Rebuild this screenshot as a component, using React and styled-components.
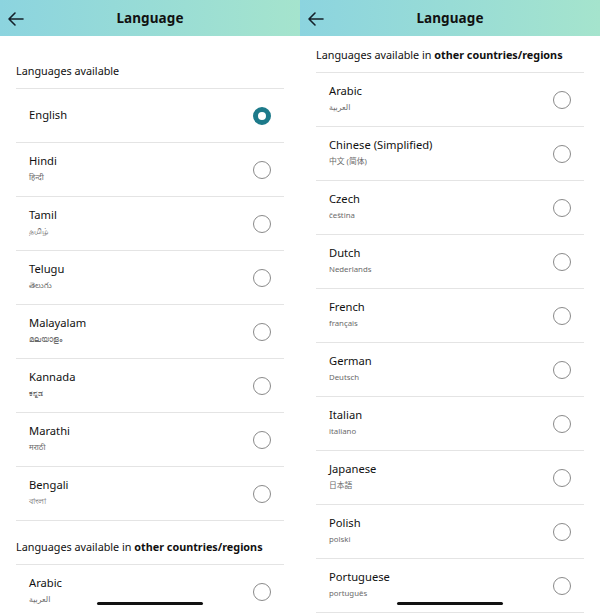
import styled, { createGlobalStyle } from 'styled-components';

const GlobalStyle = createGlobalStyle`
  body {
    margin: 0;
    background: #ffffff;
    font-family: 'Noto Sans', 'Noto Sans CJK SC', 'DejaVu Sans', sans-serif;
    color: #111111;
  }
`;

const Page = styled.div`
  display: flex;
  width: 600px;
  height: 613px;
  overflow: hidden;
`;

const Screen = styled.div`
  position: relative;
  width: 300px;
  height: 613px;
  overflow: hidden;
  background: #ffffff;
`;

const Header = styled.div`
  position: relative;
  display: flex;
  align-items: center;
  justify-content: center;
  height: 36px;
  background: linear-gradient(90deg, #8cd4df 0%, #98dcd6 50%, #a5e4cd 100%);
`;

const BackButton = styled.div`
  position: absolute;
  left: 7px;
  top: 10px;
  width: 17px;
  height: 16px;
`;

const Title = styled.h1`
  margin: 0;
  font-size: 13.5px;
  font-weight: 700;
  color: #111111;
  letter-spacing: 0.1px;
`;

const SectionTitle = styled.div`
  margin: 0 16px;
  padding: ${(p) => p.$top}px 0 ${(p) => p.$bottom}px;
  font-size: 10.8px;
  line-height: 14px;
  color: #111111;
  border-bottom: 1px solid #e4e4e4;
  b {
    font-weight: 700;
  }
`;

const Row = styled.div`
  display: flex;
  align-items: center;
  justify-content: space-between;
  height: 53px;
  margin: 0 16px;
  padding: 0 13px;
  border-bottom: 1px solid #e4e4e4;
`;

const Labels = styled.div`
  display: flex;
  flex-direction: column;
  padding-bottom: 2px;
`;

const Name = styled.div`
  font-size: 11.2px;
  line-height: 14px;
  color: #111111;
`;

const Native = styled.div`
  margin-top: 3px;
  font-size: 7.8px;
  line-height: 12px;
  color: #6a6a6a;
`;

const Radio = styled.div`
  box-sizing: border-box;
  width: 18px;
  height: 18px;
  border-radius: 50%;
  border: ${(p) => (p.$checked ? '5.5px solid #1d7a8a' : '1px solid #8a8a8a')};
  background: #ffffff;
`;

const HomeBar = styled.div`
  position: absolute;
  left: 97px;
  bottom: 8px;
  width: 106px;
  height: 3px;
  border-radius: 2px;
  background: #111111;
`;

const indian = [
  ['Hindi', 'हिन्दी'],
  ['Tamil', 'தமிழ்'],
  ['Telugu', 'తెలుగు'],
  ['Malayalam', 'മലയാളം'],
  ['Kannada', 'ಕನ್ನಡ'],
  ['Marathi', 'मराठी'],
  ['Bengali', 'বাংলা'],
];

const others = [
  ['Arabic', 'العربية'],
  ['Chinese (Simplified)', '中文 (简体)'],
  ['Czech', 'čeština'],
  ['Dutch', 'Nederlands'],
  ['French', 'français'],
  ['German', 'Deutsch'],
  ['Italian', 'italiano'],
  ['Japanese', '日本語'],
  ['Polish', 'polski'],
  ['Portuguese', 'português'],
];

function Top() {
  return (
    <Header>
      <BackButton>
        <svg width="17" height="16" viewBox="0 0 17 16" fill="none">
          <path
            d="M16 8H2M8 2L2 8l6 6"
            stroke="#14202a"
            strokeWidth="1.6"
            strokeLinecap="round"
            strokeLinejoin="round"
          />
        </svg>
      </BackButton>
      <Title>Language</Title>
    </Header>
  );
}

function LangRow({ name, native, checked }) {
  return (
    <Row>
      <Labels>
        <Name>{name}</Name>
        {native && <Native>{native}</Native>}
      </Labels>
      <Radio $checked={checked} />
    </Row>
  );
}

export default function App() {
  return (
    <Page>
      <GlobalStyle />
      <Screen>
        <Top />
        <SectionTitle $top={28} $bottom={10}>
          Languages available
        </SectionTitle>
        <LangRow name="English" checked />
        {indian.map(([n, s]) => (
          <LangRow key={n} name={n} native={s} />
        ))}
        <SectionTitle $top={19} $bottom={10}>
          Languages available in <b>other countries/regions</b>
        </SectionTitle>
        <LangRow name="Arabic" native="العربية" />
        <HomeBar />
      </Screen>
      <Screen>
        <Top />
        <SectionTitle $top={12} $bottom={10}>
          Languages available in <b>other countries/regions</b>
        </SectionTitle>
        {others.map(([n, s]) => (
          <LangRow key={n} name={n} native={s} />
        ))}
        <HomeBar />
      </Screen>
    </Page>
  );
}
